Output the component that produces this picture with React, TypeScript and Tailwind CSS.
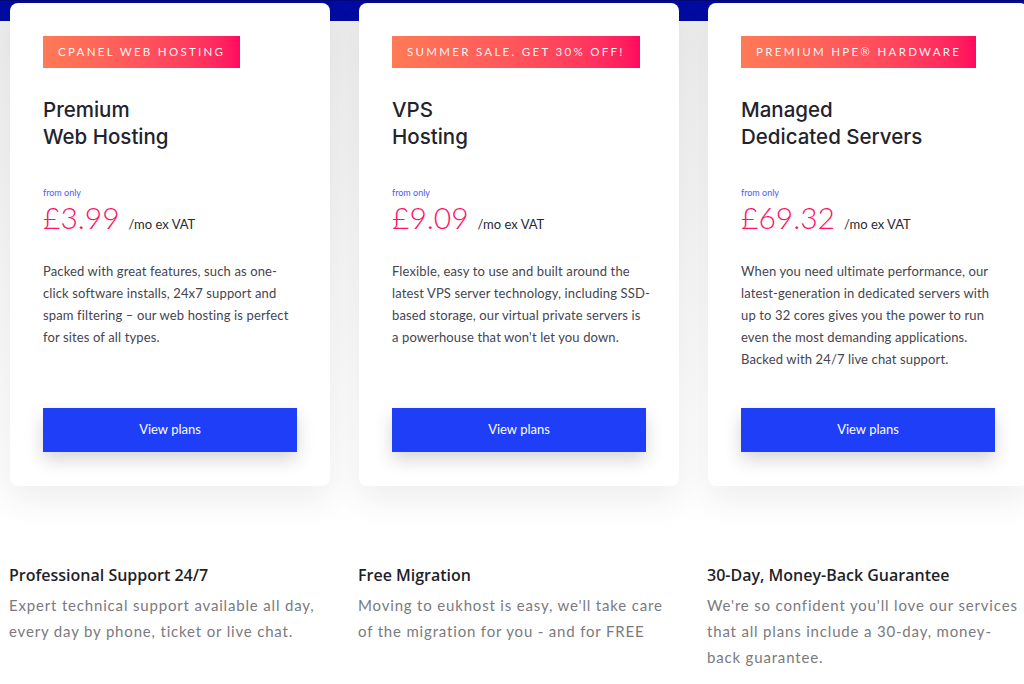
const plans = [
  {
    badge: "cPanel web hosting",
    title: ["Premium", "Web Hosting"],
    price: "£3.99",
    desc: [
      "Packed with great features, such as one-",
      "click software installs, 24x7 support and",
      "spam filtering – our web hosting is perfect",
      "for sites of all types.",
    ],
  },
  {
    badge: "Summer sale. Get 30% off!",
    title: ["VPS", "Hosting"],
    price: "£9.09",
    desc: [
      "Flexible, easy to use and built around the",
      "latest VPS server technology, including SSD-",
      "based storage, our virtual private servers is",
      "a powerhouse that won't let you down.",
    ],
  },
  {
    badge: "Premium HPE® hardware",
    title: ["Managed", "Dedicated Servers"],
    price: "£69.32",
    desc: [
      "When you need ultimate performance, our",
      "latest-generation in dedicated servers with",
      "up to 32 cores gives you the power to run",
      "even the most demanding applications.",
      "Backed with 24/7 live chat support.",
    ],
  },
];

const features = [
  {
    title: "Professional Support 24/7",
    desc: ["Expert technical support available all day,", "every day by phone, ticket or live chat."],
  },
  {
    title: "Free Migration",
    desc: ["Moving to eukhost is easy, we'll take care", "of the migration for you - and for FREE"],
  },
  {
    title: "30-Day, Money-Back Guarantee",
    desc: ["We're so confident you'll love our services", "that all plans include a 30-day, money-", "back guarantee."],
  },
];

function PlanCard({ plan }: { plan: (typeof plans)[number] }) {
  return (
    <div className="w-[320px] h-[483px] shrink-0 bg-white rounded-lg px-[33px] pt-[33px] pb-[34px] flex flex-col shadow-[0_14px_32px_rgba(0,0,0,0.06)]">
      <div className="self-start h-8 px-[15px] flex items-center bg-linear-to-r from-[#ff7a56] to-[#ff075f] text-white/95 text-[11.5px] uppercase tracking-[0.2em]">
        {plan.badge}
      </div>
      <h3 className="mt-[28px] font-['Inter',sans-serif] text-[20.5px] leading-[27px] font-medium text-[#23232e]">
        {plan.title[0]}
        <br />
        {plan.title[1]}
      </h3>
      <div className="mt-[37px] text-[9px] leading-[12px] text-[#4a5bff]">from only</div>
      <div className="flex items-baseline">
        <span className="text-[30px] leading-[36px] font-light text-[#ff1464]">{plan.price}</span>
        <span className="ml-[9px] text-[13px] text-[#2a2a33]">/mo ex VAT</span>
      </div>
      <p className="mt-[25px] text-[13px] leading-[22px] tracking-[0.01em] text-[#45454f]">
        {plan.desc.map((line) => (
          <span key={line} className="block whitespace-nowrap">
            {line}
          </span>
        ))}
      </p>
      <button className="mt-auto h-[44px] w-full bg-[#1e3ef8] text-white text-[13px] shadow-[0_8px_18px_rgba(0,0,0,0.16)]">
        View plans
      </button>
    </div>
  );
}

export default function App() {
  return (
    <div className="w-full h-[684px] overflow-hidden bg-white font-['Lato',sans-serif]">
      <div className="h-[21px] bg-[#000b9f] border-t border-[#00067a]" />
      <div className="flex flex-col bg-linear-to-b from-[#ececec] to-white to-[520px] h-[663px]">
        <div className="-mt-[18px] pl-[10px] flex gap-[29px]">
          {plans.map((p) => (
            <PlanCard key={p.price} plan={p} />
          ))}
        </div>
        <div className="mt-[79px] pl-[9px] grid grid-cols-[320px_320px_320px] gap-[29px]">
          {features.map((f) => (
            <div key={f.title}>
              <h4 className="font-['Open_Sans',sans-serif] text-[16px] leading-[20px] font-semibold text-[#1f1f29]">
                {f.title}
              </h4>
              <p className="mt-[7px] text-[15px] leading-[26px] tracking-[0.055em] text-[#7a7a80]">
                {f.desc.map((line) => (
                  <span key={line} className="block whitespace-nowrap">
                    {line}
                  </span>
                ))}
              </p>
            </div>
          ))}
        </div>
      </div>
    </div>
  );
}
